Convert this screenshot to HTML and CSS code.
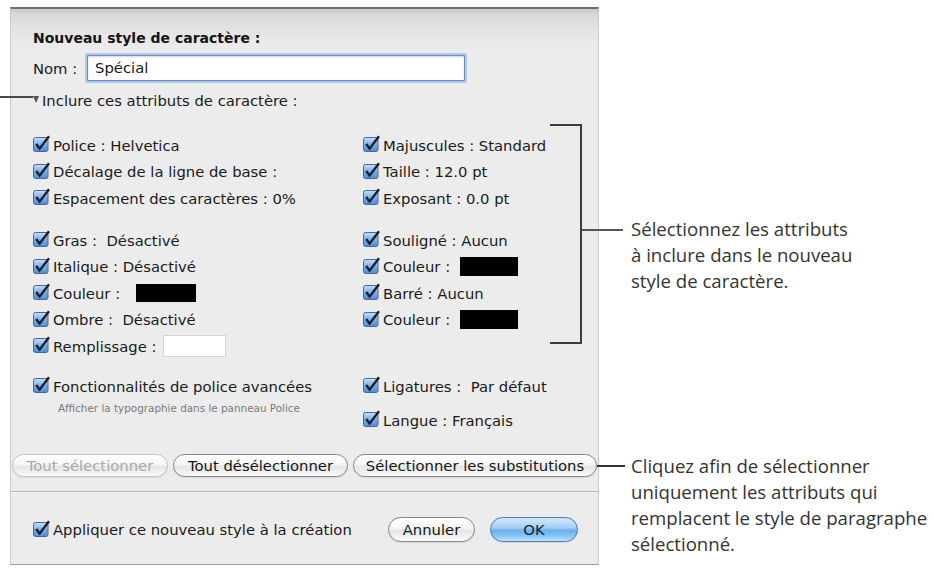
FILE: index.html
```html
<!DOCTYPE html>
<html lang="fr">
<head>
<meta charset="utf-8">
<title>Nouveau style de caractère</title>
<link rel="stylesheet" href="styles.css">
</head>
<body>
<svg class="defs" aria-hidden="true">
  <defs>
    <linearGradient id="cbfill" x1="0" y1="0" x2="0" y2="1">
      <stop offset="0" stop-color="#c9def6"/>
      <stop offset="0.5" stop-color="#7eaee6"/>
      <stop offset="1" stop-color="#4f8bd6"/>
    </linearGradient>
  </defs>
</svg>
<div class="figure">
  <div class="dialog">
    <div class="title">Nouveau style de caractère :</div>
    <div class="name-row"><span class="name-label">Nom :</span><div class="input">Spécial</div></div>
    <div class="disclosure"><span class="tri"></span>Inclure ces attributs de caractère :</div>

    <div class="group g1">
      <div class="cb"><svg class="box" viewBox="0 0 17 17"><rect x="0.5" y="2.5" width="14.5" height="14" rx="2" fill="url(#cbfill)" stroke="#46699c"/><path d="M3.2 9l3.4 4.6L16 1.2" fill="none" stroke="#17202e" stroke-width="2.4"/></svg><span>Police : Helvetica</span></div>
      <div class="cb"><svg class="box" viewBox="0 0 17 17"><rect x="0.5" y="2.5" width="14.5" height="14" rx="2" fill="url(#cbfill)" stroke="#46699c"/><path d="M3.2 9l3.4 4.6L16 1.2" fill="none" stroke="#17202e" stroke-width="2.4"/></svg><span>Majuscules : Standard</span></div>
      <div class="cb"><svg class="box" viewBox="0 0 17 17"><rect x="0.5" y="2.5" width="14.5" height="14" rx="2" fill="url(#cbfill)" stroke="#46699c"/><path d="M3.2 9l3.4 4.6L16 1.2" fill="none" stroke="#17202e" stroke-width="2.4"/></svg><span>Décalage de la ligne de base :</span></div>
      <div class="cb"><svg class="box" viewBox="0 0 17 17"><rect x="0.5" y="2.5" width="14.5" height="14" rx="2" fill="url(#cbfill)" stroke="#46699c"/><path d="M3.2 9l3.4 4.6L16 1.2" fill="none" stroke="#17202e" stroke-width="2.4"/></svg><span>Taille : 12.0 pt</span></div>
      <div class="cb"><svg class="box" viewBox="0 0 17 17"><rect x="0.5" y="2.5" width="14.5" height="14" rx="2" fill="url(#cbfill)" stroke="#46699c"/><path d="M3.2 9l3.4 4.6L16 1.2" fill="none" stroke="#17202e" stroke-width="2.4"/></svg><span>Espacement des caractères : 0%</span></div>
      <div class="cb"><svg class="box" viewBox="0 0 17 17"><rect x="0.5" y="2.5" width="14.5" height="14" rx="2" fill="url(#cbfill)" stroke="#46699c"/><path d="M3.2 9l3.4 4.6L16 1.2" fill="none" stroke="#17202e" stroke-width="2.4"/></svg><span>Exposant : 0.0 pt</span></div>
    </div>

    <div class="group g2">
      <div class="cb"><svg class="box" viewBox="0 0 17 17"><rect x="0.5" y="2.5" width="14.5" height="14" rx="2" fill="url(#cbfill)" stroke="#46699c"/><path d="M3.2 9l3.4 4.6L16 1.2" fill="none" stroke="#17202e" stroke-width="2.4"/></svg><span>Gras :&nbsp; Désactivé</span></div>
      <div class="cb"><svg class="box" viewBox="0 0 17 17"><rect x="0.5" y="2.5" width="14.5" height="14" rx="2" fill="url(#cbfill)" stroke="#46699c"/><path d="M3.2 9l3.4 4.6L16 1.2" fill="none" stroke="#17202e" stroke-width="2.4"/></svg><span>Souligné : Aucun</span></div>
      <div class="cb"><svg class="box" viewBox="0 0 17 17"><rect x="0.5" y="2.5" width="14.5" height="14" rx="2" fill="url(#cbfill)" stroke="#46699c"/><path d="M3.2 9l3.4 4.6L16 1.2" fill="none" stroke="#17202e" stroke-width="2.4"/></svg><span>Italique : Désactivé</span></div>
      <div class="cb"><svg class="box" viewBox="0 0 17 17"><rect x="0.5" y="2.5" width="14.5" height="14" rx="2" fill="url(#cbfill)" stroke="#46699c"/><path d="M3.2 9l3.4 4.6L16 1.2" fill="none" stroke="#17202e" stroke-width="2.4"/></svg><span>Couleur :</span><span class="swatch sw-r1"></span></div>
      <div class="cb"><svg class="box" viewBox="0 0 17 17"><rect x="0.5" y="2.5" width="14.5" height="14" rx="2" fill="url(#cbfill)" stroke="#46699c"/><path d="M3.2 9l3.4 4.6L16 1.2" fill="none" stroke="#17202e" stroke-width="2.4"/></svg><span>Couleur :</span><span class="swatch sw-l"></span></div>
      <div class="cb"><svg class="box" viewBox="0 0 17 17"><rect x="0.5" y="2.5" width="14.5" height="14" rx="2" fill="url(#cbfill)" stroke="#46699c"/><path d="M3.2 9l3.4 4.6L16 1.2" fill="none" stroke="#17202e" stroke-width="2.4"/></svg><span>Barré : Aucun</span></div>
      <div class="cb"><svg class="box" viewBox="0 0 17 17"><rect x="0.5" y="2.5" width="14.5" height="14" rx="2" fill="url(#cbfill)" stroke="#46699c"/><path d="M3.2 9l3.4 4.6L16 1.2" fill="none" stroke="#17202e" stroke-width="2.4"/></svg><span>Ombre :&nbsp; Désactivé</span></div>
      <div class="cb"><svg class="box" viewBox="0 0 17 17"><rect x="0.5" y="2.5" width="14.5" height="14" rx="2" fill="url(#cbfill)" stroke="#46699c"/><path d="M3.2 9l3.4 4.6L16 1.2" fill="none" stroke="#17202e" stroke-width="2.4"/></svg><span>Couleur :</span><span class="swatch sw-r1"></span></div>
      <div class="cb"><svg class="box" viewBox="0 0 17 17"><rect x="0.5" y="2.5" width="14.5" height="14" rx="2" fill="url(#cbfill)" stroke="#46699c"/><path d="M3.2 9l3.4 4.6L16 1.2" fill="none" stroke="#17202e" stroke-width="2.4"/></svg><span>Remplissage :</span><span class="swatch sw-white"></span></div>
      <div></div>
    </div>

    <div class="adv">
      <div class="adv-left">
        <div class="cb"><svg class="box" viewBox="0 0 17 17"><rect x="0.5" y="2.5" width="14.5" height="14" rx="2" fill="url(#cbfill)" stroke="#46699c"/><path d="M3.2 9l3.4 4.6L16 1.2" fill="none" stroke="#17202e" stroke-width="2.4"/></svg><span>Fonctionnalités de police avancées</span></div>
        <div class="sub">Afficher la typographie dans le panneau Police</div>
      </div>
      <div class="adv-right">
        <div class="cb"><svg class="box" viewBox="0 0 17 17"><rect x="0.5" y="2.5" width="14.5" height="14" rx="2" fill="url(#cbfill)" stroke="#46699c"/><path d="M3.2 9l3.4 4.6L16 1.2" fill="none" stroke="#17202e" stroke-width="2.4"/></svg><span>Ligatures :&nbsp; Par défaut</span></div>
        <div class="cb"><svg class="box" viewBox="0 0 17 17"><rect x="0.5" y="2.5" width="14.5" height="14" rx="2" fill="url(#cbfill)" stroke="#46699c"/><path d="M3.2 9l3.4 4.6L16 1.2" fill="none" stroke="#17202e" stroke-width="2.4"/></svg><span>Langue : Français</span></div>
      </div>
    </div>

    <div class="buttons">
      <div class="btn btn-disabled w-all">Tout sélectionner</div>
      <div class="btn w-none">Tout désélectionner</div>
      <div class="btn w-subst">Sélectionner les substitutions</div>
    </div>

    <div class="sep"></div>

    <div class="bottom">
      <div class="cb apply"><svg class="box" viewBox="0 0 17 17"><rect x="0.5" y="2.5" width="14.5" height="14" rx="2" fill="url(#cbfill)" stroke="#46699c"/><path d="M3.2 9l3.4 4.6L16 1.2" fill="none" stroke="#17202e" stroke-width="2.4"/></svg><span>Appliquer ce nouveau style à la création</span></div>
      <div class="btn btn-big w-cancel">Annuler</div>
      <div class="btn btn-big btn-ok w-ok">OK</div>
    </div>
  </div>

  <div class="notes">
    <p class="note note1">Sélectionnez les attributs<br>à inclure dans le nouveau<br>style de caractère.</p>
    <p class="note note2">Cliquez afin de sélectionner<br>uniquement les attributs qui<br>remplacent le style de paragraphe<br>sélectionné.</p>
  </div>

  <div class="lead lead-a"></div>
  <div class="lead br-top"></div>
  <div class="lead br-vert"></div>
  <div class="lead br-bot"></div>
  <div class="lead br-tick"></div>
  <div class="lead lead-c"></div>
</div>
</body>
</html>
```

FILE: styles.css
```css
html, body {
  margin: 0;
  padding: 0;
  background: #ffffff;
}

body {
  font-family: "DejaVu Sans", "Liberation Sans", sans-serif;
}

.defs {
  display: block;
  width: 0;
  height: 0;
  overflow: hidden;
}

.figure {
  position: relative;
  display: flex;
  align-items: flex-start;
  width: 934px;
  height: 568px;
  box-sizing: border-box;
  padding: 7px 0 0 10px;
  overflow: hidden;
}

/* ---------- dialog ---------- */
.dialog {
  flex: none;
  width: 589px;
  height: 558px;
  box-sizing: border-box;
  border: 1px solid #cbcbcb;
  border-top: 2px solid #6f6f6f;
  border-bottom: 1px solid #9c9c9c;
  background: linear-gradient(to bottom, #c9c9c9 0, #d7d7d7 5px, #e2e2e2 18px, #e9e9e9 32px, #ececec 42px, #ececec 100%);
  padding: 19px 0 0 22px;
  font-size: 14.8px;
  color: #1a1a1a;
}

.title {
  font-weight: bold;
  font-size: 14px;
  line-height: 20px;
  height: 20px;
  color: #151515;
}

.name-row {
  display: flex;
  align-items: center;
  margin-top: 7px;
  height: 26px;
}

.name-label {
  width: 54px;
  flex: none;
}

.input {
  width: 378px;
  height: 26px;
  box-sizing: border-box;
  border: 1px solid #6d8ebd;
  border-radius: 1px;
  background: #ffffff;
  box-shadow: 0 0 0 2px #a9c8ec, inset 0 1px 2px rgba(0, 0, 0, 0.18);
  padding-left: 7px;
  line-height: 24px;
  color: #1a1a1a;
}

.disclosure {
  display: flex;
  align-items: center;
  margin-top: 9px;
  height: 20px;
}

.tri {
  width: 0;
  height: 0;
  border-left: 3.5px solid transparent;
  border-right: 3.5px solid transparent;
  border-top: 7px solid #555555;
  margin-right: 3px;
  margin-top: -2px;
}

.group {
  display: grid;
  grid-template-columns: 330px auto;
  grid-auto-rows: 26.5px;
}

.g1 { margin-top: 21.75px; }
.g2 { margin-top: 15.5px; }

.cb {
  display: flex;
  align-items: center;
  gap: 3px;
  white-space: nowrap;
  height: 26.5px;
}

.box {
  flex: none;
  width: 17px;
  height: 17px;
  margin-top: -3px;
}

.swatch {
  display: inline-block;
  flex: none;
  background: #000000;
}

.sw-l {
  width: 60px;
  height: 18px;
  margin-left: 13px;
}

.sw-r1 {
  width: 58px;
  height: 19px;
  margin-left: 7px;
}

.sw-white {
  width: 61px;
  height: 20px;
  margin-left: 4px;
  background: #ffffff;
  border: 1px solid #d6d6d6;
}

/* advanced */
.adv {
  display: grid;
  grid-template-columns: 330px auto;
  margin-top: 13.5px;
}

.adv-right {
  display: flex;
  flex-direction: column;
  gap: 7.5px;
}

.sub {
  font-size: 10.4px;
  line-height: 12px;
  color: #7a7a7a;
  padding-left: 25px;
  margin-top: 3px;
  white-space: nowrap;
}

/* buttons */
.buttons {
  display: flex;
  gap: 5px;
  margin: 20.75px 0 0 -21px;
  height: 23px;
}

.btn {
  flex: none;
  height: 23px;
  box-sizing: border-box;
  border: 1px solid #858585;
  border-radius: 12px;
  background: linear-gradient(to bottom, #ffffff 0, #f6f6f6 45%, #e6e6e6 55%, #f9f9f9 100%);
  display: flex;
  align-items: center;
  justify-content: center;
  white-space: nowrap;
  color: #151515;
  box-shadow: 0 1px 1px rgba(0, 0, 0, 0.08);
}

.btn-disabled {
  color: #a8a8a8;
  border-color: #c2c2c2;
}

.w-all { width: 156px; }
.w-none { width: 175px; }
.w-subst { width: 244px; }

.sep {
  height: 1px;
  background: #b4b4b4;
  border-bottom: 1px solid #f6f6f6;
  margin: 14px 0 0 -22px;
  width: 587px;
}

.bottom {
  display: flex;
  align-items: center;
  margin-top: 24px;
  height: 25px;
}

.apply {
  width: 355px;
}

.btn-big {
  height: 25px;
  border-radius: 13px;
}

.w-cancel { width: 87px; }

.w-ok {
  width: 88px;
  margin-left: 15px;
}

.btn-ok {
  border-color: #4d7cb6;
  background: linear-gradient(to bottom, #d2e8fb 0, #a8d0f5 40%, #6eb0ee 55%, #8cc6f6 80%, #c6e6fd 100%);
  color: #10233a;
}

/* ---------- notes ---------- */
.notes {
  padding-left: 32px;
  font-family: "Open Sans", "Noto Sans", sans-serif;
  font-size: 18.6px;
  line-height: 26px;
  color: #333333;
  white-space: nowrap;
}

.note {
  margin: 0;
}

.note1 { margin-top: 209px; }
.note2 { margin-top: 159px; }

/* ---------- leader lines (annotation overlays) ---------- */
.lead {
  position: absolute;
  background: #3c3c3c;
}

.lead-a {
  left: 0;
  top: 96px;
  width: 33px;
  height: 1.5px;
  background: #4a4a4a;
}

.br-top {
  left: 550px;
  top: 124px;
  width: 32px;
  height: 2px;
}

.br-vert {
  left: 580px;
  top: 124px;
  width: 2px;
  height: 220px;
}

.br-bot {
  left: 550px;
  top: 342px;
  width: 32px;
  height: 2px;
}

.br-tick {
  left: 582px;
  top: 229px;
  width: 41px;
  height: 1.5px;
  background: #555555;
}

.lead-c {
  left: 597px;
  top: 465px;
  width: 28px;
  height: 2px;
  background: #333333;
}
```
